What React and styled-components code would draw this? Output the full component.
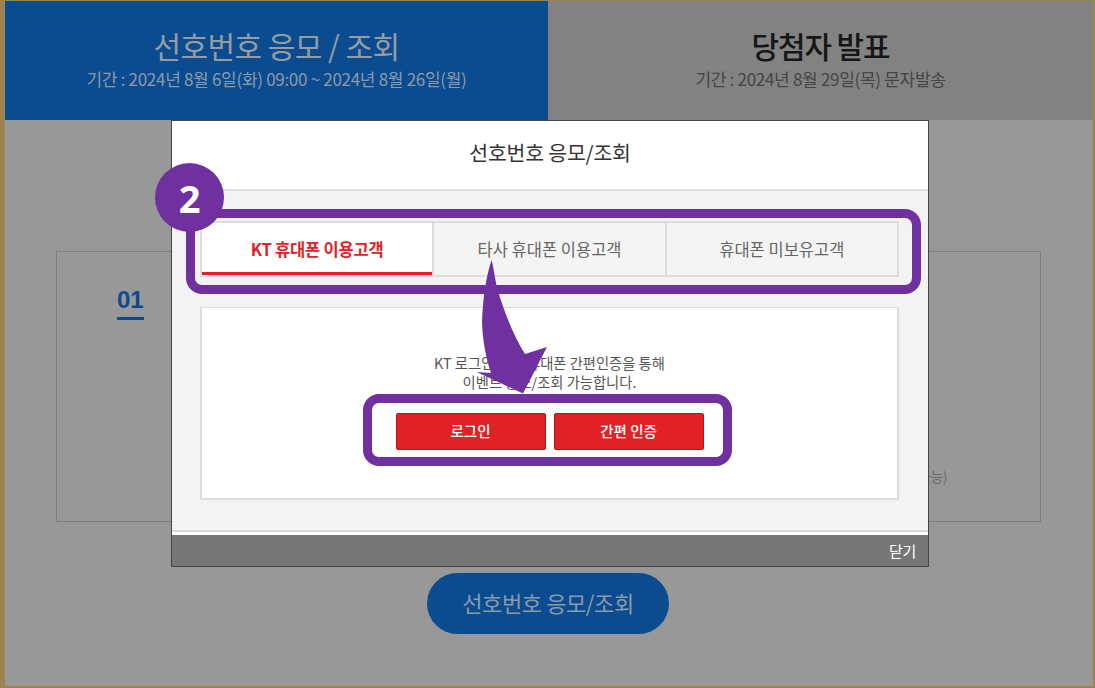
import React from "react";
import styled, { createGlobalStyle } from "styled-components";

const Global = createGlobalStyle`
  html, body { margin: 0; padding: 0; background: #989898; }
  body { font-family: "Noto Sans CJK KR", "Noto Sans", sans-serif; }
  * { box-sizing: border-box; }
`;

const Frame = styled.div`
  position: relative;
  width: 1095px;
  height: 688px;
  overflow: hidden;
  display: flex;
  flex-direction: column;
  background: #989898;
  border-style: solid;
  border-color: #9c8450;
  border-width: 1px 2px 2px 5px;
`;

const TopTabs = styled.div`
  display: flex;
  height: 119px;
  flex: none;
`;

const TopTab = styled.div`
  width: ${(p) => (p.$active ? "543px" : "545px")};
  display: flex;
  flex-direction: column;
  align-items: center;
  padding-top: 21px;
  background: ${(p) => (p.$active ? "#0a4c8f" : "#828282")};
`;

const TopTitle = styled.div`
  font-size: 30px;
  line-height: 46px;
  font-weight: ${(p) => (p.$active ? 400 : 500)};
  letter-spacing: ${(p) => (p.$active ? "-0.55px" : "-1.1px")};
  color: ${(p) => (p.$active ? "#969ca4" : "#161616")};
`;

const TopSub = styled.div`
  font-size: 17px;
  line-height: 24px;
  margin-top: -1px;
  letter-spacing: -0.3px;
  color: ${(p) => (p.$active ? "#8e9aa8" : "#454545")};
`;

const Steps = styled.div`
  margin: 131px 52px 0 51px;
  height: 271px;
  flex: none;
  border: 1px solid #7e7e7e;
  padding: 32px 93px 0 60px;
  display: flex;
  flex-direction: column;
`;

const StepNo = styled.div`
  align-self: flex-start;
  font-family: "Liberation Sans", Arial, sans-serif;
  font-size: 24px;
  line-height: 32px;
  font-weight: 700;
  color: #0a4c8f;
  border-bottom: 3px solid #0a4c8f;
  padding-bottom: 1px;
`;

const StepNote = styled.div`
  margin-top: 146px;
  align-self: flex-end;
  font-size: 14px;
  line-height: 20px;
  letter-spacing: -0.5px;
  color: #6b6b6b;
`;

const Pill = styled.button`
  align-self: center;
  margin: 51px 2px 0 0;
  width: 242px;
  height: 61px;
  flex: none;
  border: 0;
  border-radius: 31px;
  padding: 0 0 3px;
  background: #0a4c8f;
  color: #8a9aac;
  font: 400 22px/1 "Noto Sans CJK KR", sans-serif;
  letter-spacing: -0.4px;
`;

const Modal = styled.div`
  position: absolute;
  left: 166px;
  top: 119px;
  width: 758px;
  height: 447px;
  display: flex;
  flex-direction: column;
  background: #fff;
  border: 1px solid #454545;
`;

const ModalTitle = styled.div`
  height: 70px;
  flex: none;
  display: flex;
  align-items: center;
  justify-content: center;
  padding-bottom: 6px;
  font-size: 20.5px;
  letter-spacing: -0.2px;
  color: #333;
  border-bottom: 2px solid #dedede;
`;

const ModalBody = styled.div`
  height: 341px;
  flex: none;
  padding: 30px 29px 0 28px;
  background: #f3f3f3;
  border-bottom: 2px solid #d8d8d8;
`;

const TabBar = styled.div`
  display: flex;
  height: 56px;
  border: 2px solid #dcdcdc;
`;

const Tab = styled.div`
  flex: 1;
  display: flex;
  align-items: center;
  justify-content: center;
  font-size: 16.5px;
  letter-spacing: ${(p) => (p.$active ? "-0.2px" : "0")};
  font-weight: ${(p) => (p.$active ? 700 : 400)};
  color: ${(p) => (p.$active ? "#e02226" : "#666")};
  background: ${(p) => (p.$active ? "#fff" : "#f4f4f4")};
  border-right: ${(p) => (p.$last ? "0" : "2px solid #dcdcdc")};
  box-shadow: ${(p) => (p.$active ? "inset 0 -3px 0 #e02226" : "none")};
`;

const Panel = styled.div`
  margin-top: 30px;
  height: 193px;
  background: #fff;
  border: 2px solid #dcdcdc;
  border-top-width: 1px;
  padding-top: 45px;
  display: flex;
  flex-direction: column;
  align-items: center;
`;

const PanelText = styled.p`
  margin: 0;
  font-size: 14.3px;
  line-height: 19px;
  text-align: center;
  color: #555;
`;

const Actions = styled.div`
  display: flex;
  gap: 8px;
  margin-top: 22px;
`;

const RedButton = styled.button`
  width: 150px;
  height: 37px;
  border: 1px solid #c50d12;
  border-radius: 2px;
  background: #e02226;
  color: #fff;
  font: 500 14.5px/1 "Noto Sans CJK KR", sans-serif;
`;

const ModalFoot = styled.div`
  margin-top: 3px;
  flex: 1;
  display: flex;
  align-items: center;
  justify-content: flex-end;
  padding-right: 12px;
  background: #777;
  color: #fff;
  font-size: 15px;
  letter-spacing: -0.3px;
`;

const Callout = styled.div`
  position: absolute;
  left: ${(p) => p.$x - 5}px;
  top: ${(p) => p.$y - 1}px;
  width: ${(p) => p.$w}px;
  height: ${(p) => p.$h}px;
  border: 9px solid #7030a0;
  border-radius: 16px;
`;

const Badge = styled.div`
  position: absolute;
  left: 150px;
  top: 162px;
  width: 69px;
  height: 69px;
  border-radius: 50%;
  background: #7030a0;
  color: #fff;
  display: flex;
  align-items: center;
  justify-content: center;
  font: 700 38px/1 "Noto Sans", sans-serif;
`;

const ArrowSvg = styled.svg`
  position: absolute;
  left: 465px;
  top: 255px;
`;

export default function App() {
  return (
    <>
      <Global />
      <Frame>
        <TopTabs>
          <TopTab $active>
            <TopTitle $active>선호번호 응모 / 조회</TopTitle>
            <TopSub $active>기간 : 2024년 8월 6일(화) 09:00 ~ 2024년 8월 26일(월)</TopSub>
          </TopTab>
          <TopTab>
            <TopTitle>당첨자 발표</TopTitle>
            <TopSub>기간 : 2024년 8월 29일(목) 문자발송</TopSub>
          </TopTab>
        </TopTabs>
        <Steps>
          <StepNo>01</StepNo>
          <StepNote>(응모 가능)</StepNote>
        </Steps>
        <Pill>선호번호 응모/조회</Pill>

        <Modal>
          <ModalTitle>선호번호 응모/조회</ModalTitle>
          <ModalBody>
            <TabBar>
              <Tab $active>KT 휴대폰 이용고객</Tab>
              <Tab>타사 휴대폰 이용고객</Tab>
              <Tab $last>휴대폰 미보유고객</Tab>
            </TabBar>
            <Panel>
              <PanelText>
                KT 로그인 또는 휴대폰 간편인증을 통해
                <br />
                이벤트 응모/조회 가능합니다.
              </PanelText>
              <Actions>
                <RedButton>로그인</RedButton>
                <RedButton>간편 인증</RedButton>
              </Actions>
            </Panel>
          </ModalBody>
          <ModalFoot>닫기</ModalFoot>
        </Modal>

        <Callout $x={186} $y={209} $w={735} $h={85} />
        <Callout $x={363} $y={394} $w={369} $h={72} />
        <Badge>2</Badge>
        <ArrowSvg width="90" height="145" viewBox="470 256 90 145">
          <path
            d="M491.7 260 C486 276 483 298 482 322 C482.5 340 486 358 491 373 L476.7 372 L523 393.5 L547 347 L525 354 C515 338 505 315 497 288 C495 278 493.5 268 491.7 260 Z"
            fill="#7030a0"
          />
        </ArrowSvg>
      </Frame>
    </>
  );
}
